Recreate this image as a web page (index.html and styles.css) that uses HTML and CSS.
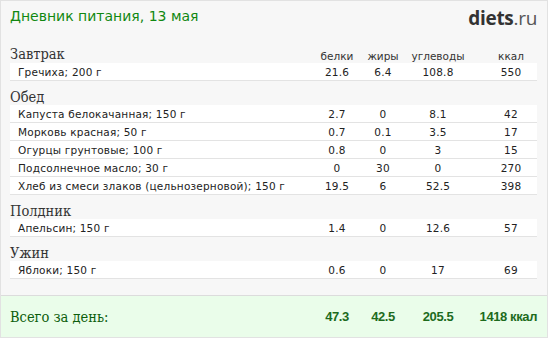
FILE: index.html
```html
<!DOCTYPE html>
<html lang="ru">
<head>
<meta charset="utf-8">
<title>Дневник питания</title>
<link rel="stylesheet" href="styles.css">
</head>
<body>
<div class="diary">
  <div class="top">
    <div class="title">Дневник питания, 13 мая</div>
    <div class="logo"><b>diets</b>.ru</div>
  </div>
  <div class="meals">
    <div class="head grid">
      <div class="meal">Завтрак</div>
      <div class="c">белки</div>
      <div class="c">жиры</div>
      <div class="c">углеводы</div>
      <div class="c k">ккал</div>
    </div>
    <div class="row grid"><div class="n">Гречиха; 200 г</div><div class="c">21.6</div><div class="c">6.4</div><div class="c">108.8</div><div class="c k">550</div></div>

    <div class="meal sec">Обед</div>
    <div class="row grid"><div class="n">Капуста белокачанная; 150 г</div><div class="c">2.7</div><div class="c">0</div><div class="c">8.1</div><div class="c k">42</div></div>
    <div class="row grid"><div class="n">Морковь красная; 50 г</div><div class="c">0.7</div><div class="c">0.1</div><div class="c">3.5</div><div class="c k">17</div></div>
    <div class="row grid"><div class="n">Огурцы грунтовые; 100 г</div><div class="c">0.8</div><div class="c">0</div><div class="c">3</div><div class="c k">15</div></div>
    <div class="row grid"><div class="n">Подсолнечное масло; 30 г</div><div class="c">0</div><div class="c">30</div><div class="c">0</div><div class="c k">270</div></div>
    <div class="row grid"><div class="n">Хлеб из смеси злаков (цельнозерновой); 150 г</div><div class="c">19.5</div><div class="c">6</div><div class="c">52.5</div><div class="c k">398</div></div>

    <div class="meal sec">Полдник</div>
    <div class="row grid"><div class="n">Апельсин; 150 г</div><div class="c">1.4</div><div class="c">0</div><div class="c">12.6</div><div class="c k">57</div></div>

    <div class="meal sec">Ужин</div>
    <div class="row grid"><div class="n">Яблоки; 150 г</div><div class="c">0.6</div><div class="c">0</div><div class="c">17</div><div class="c k">69</div></div>
  </div>
  <div class="total">
    <div class="grid">
      <div class="tl">Всего за день:</div>
      <div class="c">47.3</div>
      <div class="c">42.5</div>
      <div class="c">205.5</div>
      <div class="c k tk">1418 ккал</div>
    </div>
  </div>
</div>
</body>
</html>
```
FILE: styles.css
```css
html, body {
  margin: 0;
  padding: 0;
  background: #ffffff;
}
.diary {
  width: 546px;
  height: 336px;
  border: 1px solid #e2e2e2;
  background: #f7f7f7;
  display: flex;
  flex-direction: column;
}
.top {
  display: flex;
  justify-content: space-between;
  align-items: flex-start;
  padding: 5px 10px 0 9px;
  height: 36px;
  box-sizing: border-box;
  flex: none;
}
.title {
  font-family: "DejaVu Sans", Verdana, sans-serif;
  font-size: 14px;
  line-height: 20px;
  color: #118811;
}
.logo {
  font-family: "Open Sans", sans-serif;
  font-size: 19px;
  line-height: 24px;
  color: #555;
  letter-spacing: -0.3px;
}
.logo b {
  color: #333;
  font-weight: 700;
}
.meals {
  padding: 0 10px 0 9px;
  flex: 1;
}
.grid {
  display: grid;
  grid-template-columns: 1fr 48px 44px 66px 66px;
  align-items: center;
}
.c {
  text-align: center;
}
.k {
  padding-left: 14px;
}
.head {
  height: 26px;
  align-items: end;
  font-family: "DejaVu Sans", Verdana, sans-serif;
  font-size: 10.5px;
  line-height: 14px;
  color: #333;
}
.meal {
  font-family: "DejaVu Serif Condensed", "DejaVu Serif", serif;
  font-stretch: semi-condensed;
  font-size: 14.5px;
  color: #333;
}
.head .meal {
  line-height: 18px;
}
.sec {
  height: 24px;
  line-height: 20px;
  padding-top: 6px;
  box-sizing: border-box;
}
.row {
  height: 18px;
  box-sizing: border-box;
  background: #ffffff;
  border-bottom: 1px solid #e3e3e3;
  font-family: "DejaVu Sans", Verdana, sans-serif;
  font-size: 10.5px;
  letter-spacing: 0.2px;
  color: #222;
}
.row .n {
  padding-left: 8px;
  white-space: nowrap;
}
.total {
  height: 42px;
  flex: none;
  box-sizing: border-box;
  border-top: 1px solid #dcdcdc;
  background: #eafdea;
  padding: 0 10px 0 9px;
  display: flex;
  flex-direction: column;
  justify-content: center;
}
.tl {
  font-family: "DejaVu Serif Condensed", "DejaVu Serif", serif;
  font-stretch: semi-condensed;
  font-size: 14.5px;
  color: #0d5e0d;
}
.total .c {
  font-family: "Liberation Sans", Arial, sans-serif;
  font-weight: 700;
  font-size: 13px;
  letter-spacing: -0.4px;
  color: #1d6b1d;
}
.total .tk {
  text-align: right;
  padding-left: 0;
  white-space: nowrap;
}
```
